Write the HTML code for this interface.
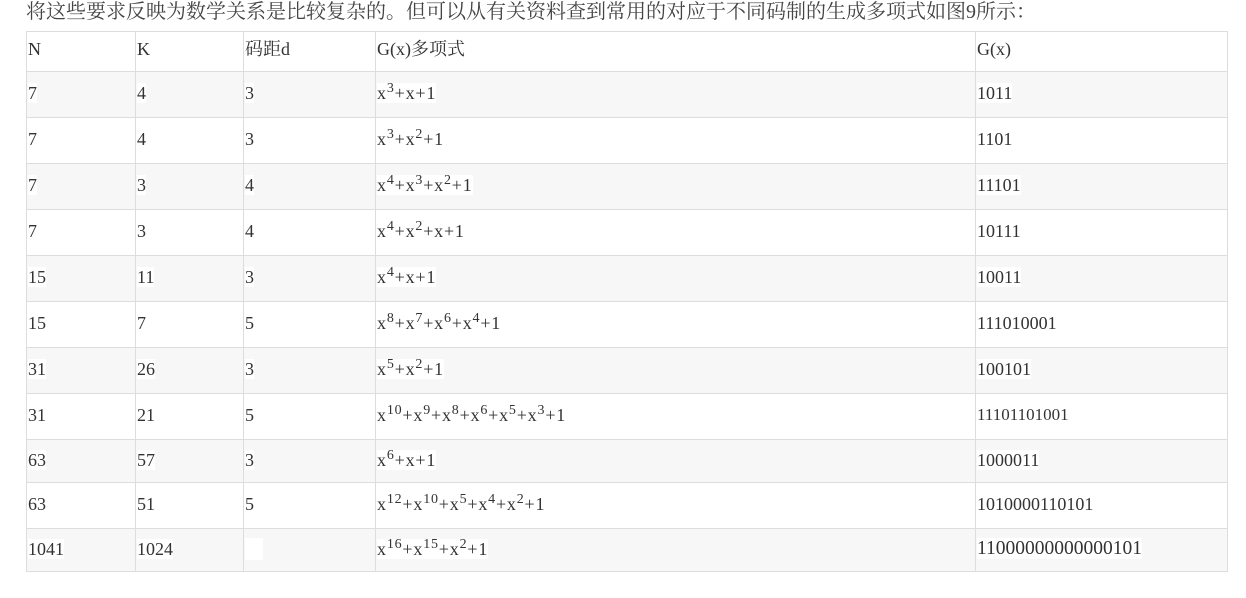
<!DOCTYPE html>
<html><head><meta charset="utf-8"><style>
body{margin:0;width:1246px;height:598px;background:#fff;font-family:"Liberation Serif","Noto Serif CJK SC",serif;color:#333;font-size:18px;position:relative;overflow:hidden}
.h{position:absolute;left:26px;top:-5px;white-space:nowrap;font-size:20px;color:#444}
table{position:absolute;left:26px;top:31px;border-collapse:collapse;table-layout:fixed}
td{border:1px solid #ddd;padding:0 0 3px 1px;vertical-align:middle;white-space:nowrap;line-height:22px}
tr.g td{background:#f7f7f7}
td span{background:#fff}
td.p{letter-spacing:0.8px}
sup{font-size:14px;vertical-align:7px;line-height:0}
</style></head><body>
<div class="h">将这些要求反映为数学关系是比较复杂的。但可以从有关资料查到常用的对应于不同码制的生成多项式如图9所示：</div>
<table>
<colgroup><col style="width:109px"><col style="width:108px"><col style="width:132px"><col style="width:600px"><col style="width:252px"></colgroup>
<tr style="height:40px"><td style="padding-bottom:6px">N</td><td style="padding-bottom:6px">K</td><td style="padding-bottom:6px">码距d</td><td style="padding-bottom:6px">G(x)多项式</td><td style="padding-bottom:6px">G(x)</td></tr>
<tr class="g" style="height:46px"><td><span>7</span></td><td><span>4</span></td><td><span>3</span></td><td class="p"><span>x<sup>3</sup>+x+1</span></td><td><span>1011</span></td></tr>
<tr style="height:46px"><td>7</td><td>4</td><td>3</td><td class="p">x<sup>3</sup>+x<sup>2</sup>+1</td><td>1101</td></tr>
<tr class="g" style="height:46px"><td><span>7</span></td><td><span>3</span></td><td><span>4</span></td><td class="p"><span>x<sup>4</sup>+x<sup>3</sup>+x<sup>2</sup>+1</span></td><td><span>11101</span></td></tr>
<tr style="height:46px"><td>7</td><td>3</td><td>4</td><td class="p">x<sup>4</sup>+x<sup>2</sup>+x+1</td><td>10111</td></tr>
<tr class="g" style="height:46px"><td><span>15</span></td><td><span>11</span></td><td><span>3</span></td><td class="p"><span>x<sup>4</sup>+x+1</span></td><td><span>10011</span></td></tr>
<tr style="height:46px"><td>15</td><td>7</td><td>5</td><td class="p">x<sup>8</sup>+x<sup>7</sup>+x<sup>6</sup>+x<sup>4</sup>+1</td><td>111010001</td></tr>
<tr class="g" style="height:46px"><td><span>31</span></td><td><span>26</span></td><td><span>3</span></td><td class="p"><span>x<sup>5</sup>+x<sup>2</sup>+1</span></td><td><span>100101</span></td></tr>
<tr style="height:46px"><td>31</td><td>21</td><td>5</td><td class="p">x<sup>10</sup>+x<sup>9</sup>+x<sup>8</sup>+x<sup>6</sup>+x<sup>5</sup>+x<sup>3</sup>+1</td><td style="font-size:17px">11101101001</td></tr>
<tr class="g" style="height:43px"><td><span>63</span></td><td><span>57</span></td><td><span>3</span></td><td class="p"><span>x<sup>6</sup>+x+1</span></td><td><span>1000011</span></td></tr>
<tr style="height:46px"><td>63</td><td>51</td><td>5</td><td class="p">x<sup>12</sup>+x<sup>10</sup>+x<sup>5</sup>+x<sup>4</sup>+x<sup>2</sup>+1</td><td>1010000110101</td></tr>
<tr class="g" style="height:43px"><td><span>1041</span></td><td><span>1024</span></td><td><span style="display:inline-block;width:18px;height:22px;vertical-align:middle"></span></td><td class="p"><span>x<sup>16</sup>+x<sup>15</sup>+x<sup>2</sup>+1</span></td><td style="font-size:19.5px"><span>11000000000000101</span></td></tr>
</table>
</body></html>
